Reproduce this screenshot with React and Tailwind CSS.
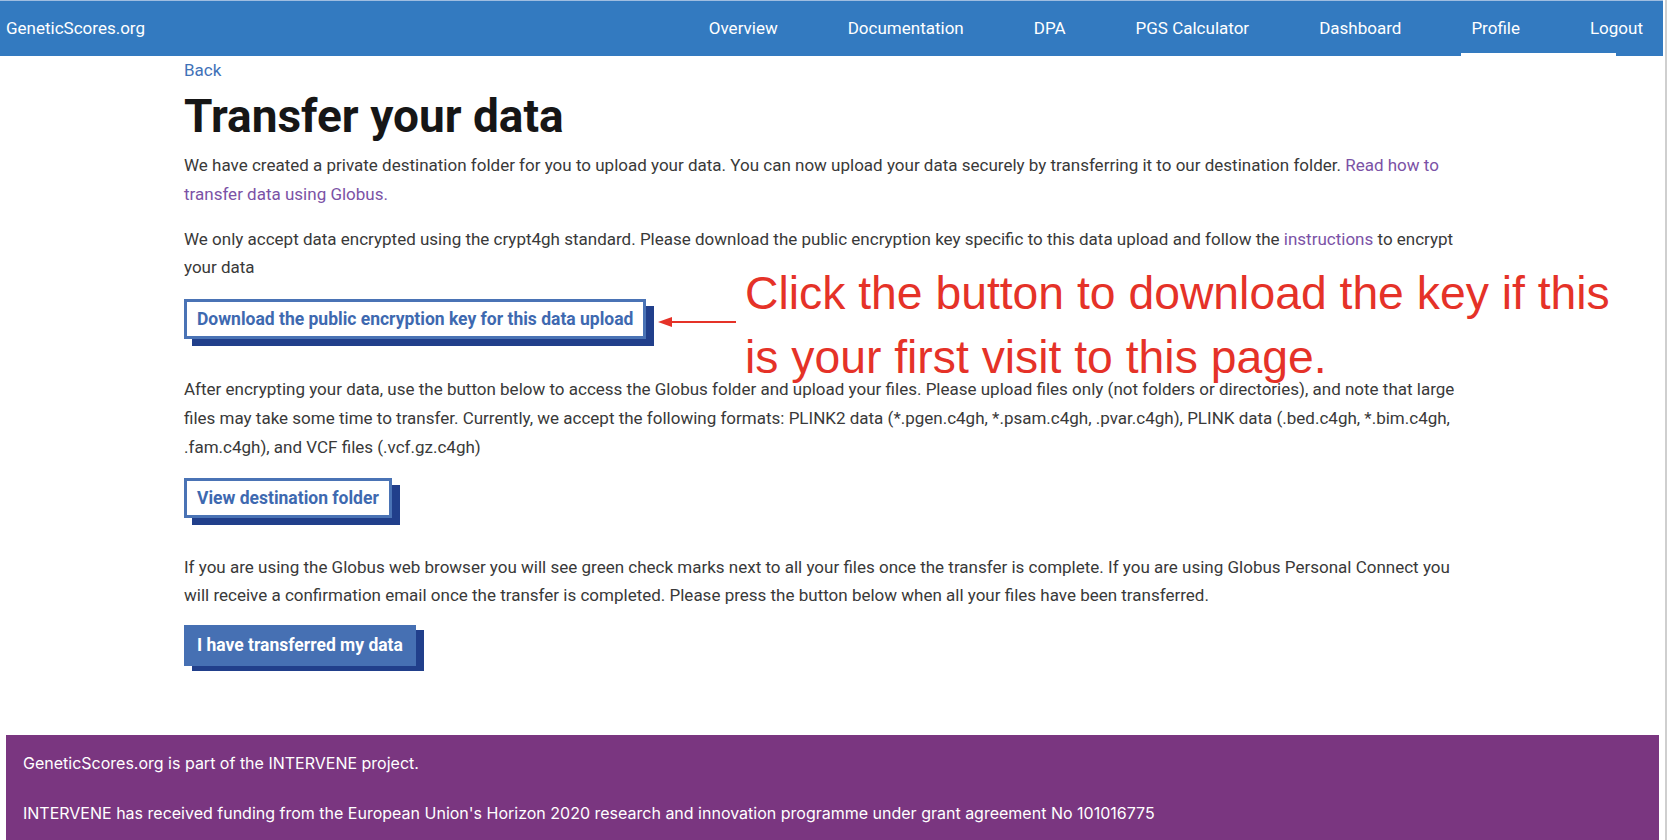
import React from "react";

const navItems = ["Overview", "Documentation", "DPA", "PGS Calculator", "Dashboard", "Profile", "Logout"];

function OutlineButton({ children }) {
  return (
    <button className="block border-[3px] border-[#4a73b5] bg-white px-[10px] py-[5px] text-[17.5px] leading-[24px] font-bold text-[#3e69b0] shadow-[8px_7px_0_#213f8b]">
      {children}
    </button>
  );
}

export default function App() {
  return (
    <div
      className="relative flex h-[840px] w-[1670px] overflow-hidden bg-white"
      style={{ fontFamily: "Roboto, 'Noto Sans', sans-serif" }}
    >
      <div className="flex w-[1665px] flex-col">
        <nav className="relative flex h-[56px] w-[1663px] items-center border-t border-[#9fbde0] bg-[#337ac0] text-white">
          <div className="pl-[6px] text-[17px]">GeneticScores.org</div>
          <div className="ml-auto flex h-full items-center gap-[70px] pr-[20px] text-[17px]">
            {navItems.map((item) => (
              <span key={item}>{item}</span>
            ))}
          </div>
          <div className="absolute bottom-0 left-[1461px] h-[3px] w-[155px] bg-white" />
        </nav>

        <main className="ml-[184px] w-[1282px] text-[17px] leading-[28.8px] text-[#393939]">
          <a className="block pt-[2px] leading-[24px] text-[#3f72b8]">Back</a>
          <h1 className="mt-[8px] text-[46px] leading-[52px] font-bold text-[#161616]">Transfer your data</h1>
          <p className="mt-[9px]">
            We have created a private destination folder for you to upload your data. You can now upload your data securely by
            transferring it to our destination folder.{" "}
            <a className="text-[#7b52a6]">Read how to transfer data using Globus.</a>
          </p>
          <p className="mt-[16px]">
            We only accept data encrypted using the crypt4gh standard. Please download the public encryption key specific to this
            data upload and follow the <a className="text-[#7b52a6]">instructions</a> to encrypt your data
          </p>
          <div className="mt-[17px]">
            <OutlineButton>Download the public encryption key for this data upload</OutlineButton>
          </div>
          <p className="mt-[36px]">
            After encrypting your data, use the button below to access the Globus folder and upload your files. Please upload files
            only (not folders or directories), and note that large files may take some time to transfer. Currently, we accept the
            following formats: PLINK2 data (*.pgen.c4gh, *.psam.c4gh, .pvar.c4gh), PLINK data (.bed.c4gh, *.bim.c4gh, .fam.c4gh),
            and VCF files (.vcf.gz.c4gh)
          </p>
          <div className="mt-[16px]">
            <OutlineButton>View destination folder</OutlineButton>
          </div>
          <p className="mt-[35px]">
            If you are using the Globus web browser you will see green check marks next to all your files once the transfer is
            complete. If you are using Globus Personal Connect you will receive a confirmation email once the transfer is completed.
            Please press the button below when all your files have been transferred.
          </p>
          <div className="mt-[15px]">
            <button className="block bg-[#4670b3] px-[13px] py-[8px] text-[17.5px] leading-[25px] font-bold text-white shadow-[8px_5px_0_#213f8b]">
              I have transferred my data
            </button>
          </div>
        </main>

        <footer
          className="mt-auto ml-[6px] flex h-[105px] w-[1653px] flex-col justify-center gap-[26px] bg-[#7a3680] px-[17px] text-[16px] leading-[24px] text-white"
          style={{ fontFamily: "Inter, 'Liberation Sans', sans-serif" }}
        >
          <div>GeneticScores.org is part of the INTERVENE project.</div>
          <div>
            INTERVENE has received funding from the European Union's Horizon 2020 research and innovation programme under grant
            agreement No 101016775
          </div>
        </footer>
      </div>
      <div className="w-[5px] border-l-2 border-[#cfcfcf]" />

      <div
        className="absolute left-[745px] top-[261px] text-[46.3px] leading-[64px] text-[#e53228]"
        style={{ fontFamily: "'Liberation Sans', Arial, sans-serif" }}
      >
        Click the button to download the key if this
        <br />
        is your first visit to this page.
      </div>
      <svg className="absolute left-[658px] top-[315px]" width="80" height="14" viewBox="0 0 80 14">
        <line x1="10" y1="7" x2="78" y2="7" stroke="#e53228" strokeWidth="2" />
        <polygon points="0,7 14,2 14,12" fill="#e53228" />
      </svg>
    </div>
  );
}
